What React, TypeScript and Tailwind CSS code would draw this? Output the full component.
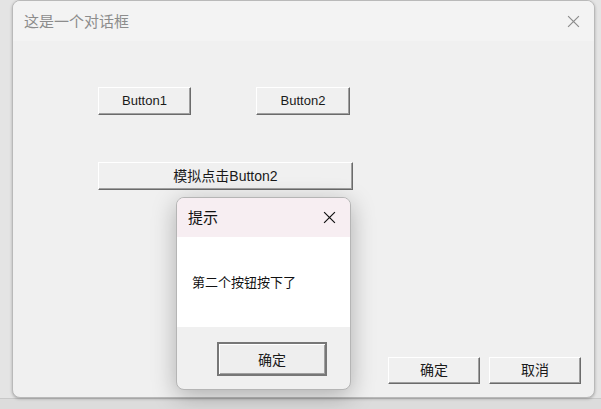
const font = "font-['Liberation_Sans','Noto_Sans_CJK_SC',sans-serif]";
const cjk = "font-['Noto_Sans_CJK_SC','Noto_Sans',sans-serif]";

const Close = ({ className }: { className: string }) => (
  <svg viewBox="0 0 12 12" className={className} fill="none" stroke="currentColor" strokeWidth="1.1">
    <path d="M1 1 L11 11 M11 1 L1 11" />
  </svg>
);

const WinButton = ({ label, className }: { label: string; className: string }) => (
  <button
    className={`flex items-center justify-center bg-[#f0f0f0] text-[#1a1a1a] border border-t-white border-l-white border-r-[#6b6b6b] border-b-[#6b6b6b] shadow-[inset_-1px_-1px_0_#a0a0a0] ${font} ${className}`}
  >
    {label}
  </button>
);

const App = () => {
  return (
    <div className="relative w-[601px] h-[409px] overflow-hidden bg-[#e4e4e4]">
      <div className="flex h-[398px] pl-[12px] pr-[6px]">
        {/* main dialog */}
        <div className="flex flex-col w-[583px] h-[398px] rounded-[8px] bg-[#f0f0f0] border border-[#b9b9b9] shadow-[0_1px_3px_rgba(0,0,0,0.25)] overflow-hidden">
          <div className="flex items-center justify-between h-[40px] pl-[11px] pr-[14px] bg-[#f3f3f3]">
            <span className={`text-[15px] text-[#8c8c8c] ${cjk}`}>这是一个对话框</span>
            <Close className="w-[13px] h-[13px] text-[#8c8c8c]" />
          </div>
          <div className="flex flex-col flex-1 pl-[85px] pt-[46px] pr-[13px] pb-[13px]">
            <div className="flex gap-[65px]">
              <WinButton label="Button1" className="w-[93px] h-[28px] text-[13px]" />
              <WinButton label="Button2" className="w-[94px] h-[28px] text-[13px]" />
            </div>
            <WinButton label="模拟点击Button2" className="mt-[47px] w-[255px] h-[28px] text-[14px]" />
            <div className="mt-auto flex justify-end gap-[9px]">
              <WinButton label="确定" className="w-[92px] h-[27px] text-[14px]" />
              <WinButton label="取消" className="w-[92px] h-[27px] text-[14px]" />
            </div>
          </div>
        </div>
      </div>
      <div className="h-[11px] bg-[#dcdcdc] border-t border-[#c8c8c8]" />

      {/* message box overlay */}
      <div className="absolute left-[176px] top-[197px] w-[175px] h-[193px] flex flex-col rounded-[8px] overflow-hidden border border-[#b5b5b5] bg-[#f0f0f0] shadow-[0_6px_24px_rgba(0,0,0,0.28)]">
        <div className="flex items-center justify-between h-[39px] pl-[11px] pr-[14px] bg-[#f7eef2]">
          <span className={`text-[15px] text-[#111] ${cjk}`}>提示</span>
          <Close className="w-[13px] h-[13px] text-[#111]" />
        </div>
        <div className="flex items-center h-[90px] pl-[15px] bg-white">
          <span className={`text-[13px] text-[#111] ${cjk}`}>第二个按钮按下了</span>
        </div>
        <div className="flex flex-1 items-start pl-[40px] pt-[15px]">
          <button
            className={`flex items-center justify-center w-[110px] h-[34px] bg-[#eeeeee] text-[14px] text-[#1a1a1a] border-2 border-[#777] shadow-[inset_1px_1px_0_#fff,inset_-1px_-1px_0_#a0a0a0] ${cjk}`}
          >
            确定
          </button>
        </div>
      </div>
    </div>
  );
};

export default App;
